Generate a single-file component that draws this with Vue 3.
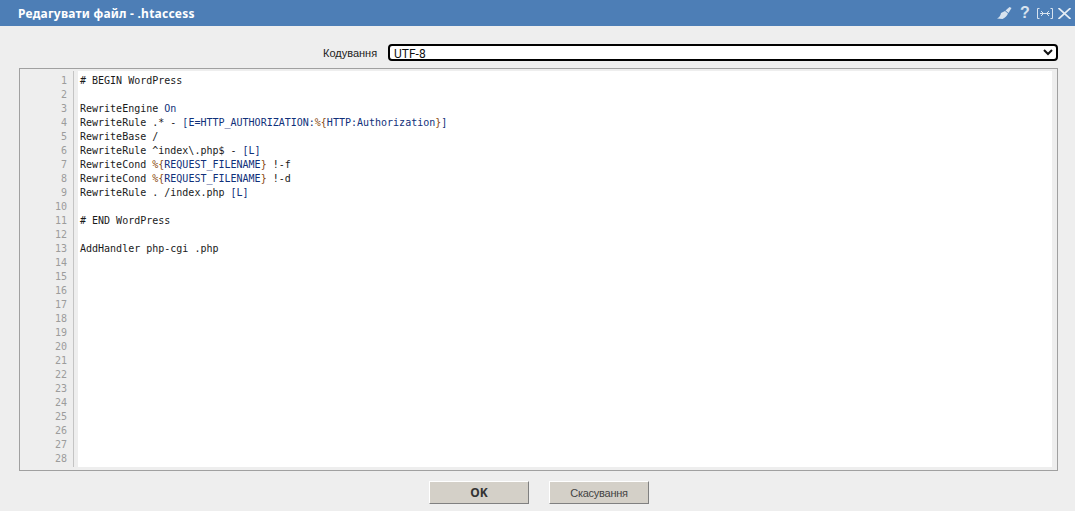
<script setup>
const lines = [
  [['# BEGIN WordPress', 'k']],
  [],
  [['RewriteEngine ', 'k'], ['On', 'b']],
  [['RewriteRule ', 'k'], ['.* - ', 'k'], ['[E=HTTP_AUTHORIZATION:', 'b'], ['%{', 'o'], ['HTTP:Authorization', 'b'], ['}', 'o'], [']', 'b']],
  [['RewriteBase /', 'k']],
  [['RewriteRule ^index\\.php$ - ', 'k'], ['[L]', 'b']],
  [['RewriteCond ', 'k'], ['%{', 'o'], ['REQUEST_FILENAME', 'b'], ['}', 'o'], [' !-f', 'k']],
  [['RewriteCond ', 'k'], ['%{', 'o'], ['REQUEST_FILENAME', 'b'], ['}', 'o'], [' !-d', 'k']],
  [['RewriteRule . /index.php ', 'k'], ['[L]', 'b']],
  [],
  [['# END WordPress', 'k']],
  [],
  [['AddHandler php-cgi .php', 'k']],
]
const nums = Array.from({ length: 28 }, (_, i) => i + 1)
</script>

<template>
  <div class="dialog">
    <header class="titlebar">
      <h1 class="title">Редагувати файл - .htaccess</h1>
      <div class="tools">
        <svg class="ic broom" width="15" height="12" viewBox="0 0 15 12"><path d="M0 11.5 C2.5 10.5 3.5 8.5 4 6 L8 4 L11 6.5 C10 9 8 11 5.5 12 Z" fill="#d8e3ef"/><path d="M8.5 3.5 L12.5 0 L14.5 1 L11.5 6 Z" fill="#d8e3ef"/></svg>
        <span class="q">?</span>
        <svg class="ic expand" width="16" height="11" viewBox="0 0 16 11" fill="none" stroke="#d8e3ef" stroke-width="1"><path d="M2.5 .5 H.5 V10.5 H2.5 M13.5 .5 H15.5 V10.5 H13.5 M3 5.5 H13"/><path d="M4 3 L6.5 5.5 L4 8 M12 3 L9.5 5.5 L12 8"/></svg>
        <svg class="ic close" width="13" height="11" viewBox="0 0 13 11" stroke="#e4ecf4" stroke-width="1.7" fill="none"><path d="M.5 0 L12.5 11 M12.5 0 L.5 11"/></svg>
      </div>
    </header>
    <div class="encoding">
      <label class="label">Кодування</label>
      <select class="select"><option>UTF-8</option></select>
    </div>
    <div class="editor">
      <div class="gutter">
        <div v-for="n in nums" :key="n" class="num">{{ n }}</div>
      </div>
      <div class="code">
        <div v-for="(l, i) in lines" :key="i" class="line"><span v-for="(s, j) in l" :key="j" :class="s[1]">{{ s[0] }}</span></div>
      </div>
    </div>
    <footer class="actions">
      <button class="btn ok">OK</button>
      <button class="btn">Скасування</button>
    </footer>
  </div>
</template>

<style>
html, body { margin: 0; background: #eeeeee; overflow: hidden; }
</style>

<style scoped>
.dialog {
  width: 1075px;
  height: 511px;
  background: #eeeeee;
  font-family: "Noto Sans", "Liberation Sans", sans-serif;
  overflow: hidden;
}
.titlebar {
  height: 26px;
  background: #4d7eb6;
  display: flex;
  align-items: center;
  justify-content: space-between;
  padding: 0 4px 0 18px;
}
.title {
  margin: 0;
  font-size: 12px;
  font-weight: 700;
  letter-spacing: 0.22px;
  color: #fff;
}
.tools { display: flex; align-items: center; gap: 5px; }
.ic { display: block; }
.broom { margin-right: 3px; }
.q { color: #d8e3ef; font: 700 16px "Liberation Sans", sans-serif; width: 9px; text-align: center; margin-right: 3px; line-height: 16px; }
.encoding {
  height: 18px;
  margin-top: 18px;
  display: flex;
  align-items: flex-start;
  padding-left: 323px;
}
.label { font: 11px/19px "Liberation Sans", sans-serif; color: #222; width: 65px; white-space: nowrap; }
.select {
  width: 670px;
  height: 17px;
  box-sizing: border-box;
  border: 2px solid #000;
  border-radius: 4px;
  background: #fff;
  font: 12px "Roboto", "Liberation Sans", sans-serif;
  padding: 0;
  color: #111;
}
.editor {
  margin: 6px 0 0 19px;
  width: 1039px;
  height: 403px;
  box-sizing: border-box;
  border: 1px solid #a0a0a0;
  display: flex;
  padding-top: 2px;
  padding-bottom: 3px;
  font: 10px/14px "DejaVu Sans Mono", monospace;
}
.gutter {
  width: 54px;
  box-sizing: border-box;
  border-right: 1px solid #c4c4c4;
  padding: 3px 6px 0 0;
  text-align: right;
  color: #9c9c9c;
  overflow: hidden;
}
.code {
  margin-left: 4px;
  width: 974px;
  background: #fff;
  padding: 3px 0 0 2px;
  box-sizing: border-box;
}
.line { height: 14px; white-space: pre; }
.k { color: #1a1a1a; }
.b { color: #10307a; }
.o { color: #8a4a10; }
.actions {
  margin-top: 10px;
  display: flex;
  padding-left: 429px;
  gap: 20px;
}
.btn {
  width: 100px;
  height: 23px;
  padding: 0;
  background: #d4d0c8;
  border: 1px solid;
  border-color: #fff #808080 #808080 #fff;
  font: 11px "Liberation Sans", sans-serif;
  letter-spacing: -0.25px;
  color: #444;
}
.ok { font: 700 12px "Noto Sans", sans-serif; letter-spacing: 0; color: #333; }
</style>
